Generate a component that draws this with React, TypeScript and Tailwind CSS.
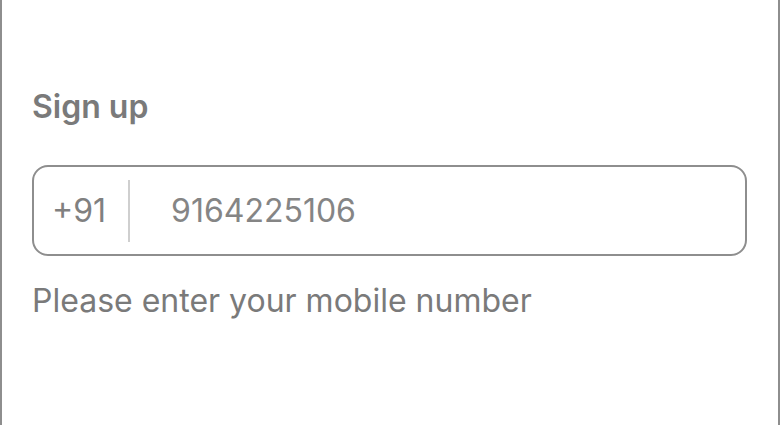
export default function App() {
  return (
    <div
      className="h-[425px] w-[780px] border-x-2 border-[#8e8e8e] bg-white pl-[30px] pr-[31px] pt-[87px] text-[#777777]"
      style={{ fontFamily: 'Inter, "Noto Sans", sans-serif' }}
    >
      <h1 className="text-[32px] font-semibold leading-[40px] text-[#7a7a7a]">Sign up</h1>

      <div className="mt-[38px] flex h-[91px] items-center rounded-[16px] border-2 border-[#8e8e8e]">
        <span className="pl-[18px] text-[32px] leading-none text-[#808080]">+91</span>
        <div className="ml-[22px] h-[62px] w-[2px] bg-[#cfcfcf]" />
        <span className="pl-[41px] text-[32px] leading-none text-[#858585]">9164225106</span>
      </div>

      <p className="mt-[25px] text-[32px] leading-[40px] text-[#7a7a7a]">Please enter your mobile number</p>
    </div>
  );
}
